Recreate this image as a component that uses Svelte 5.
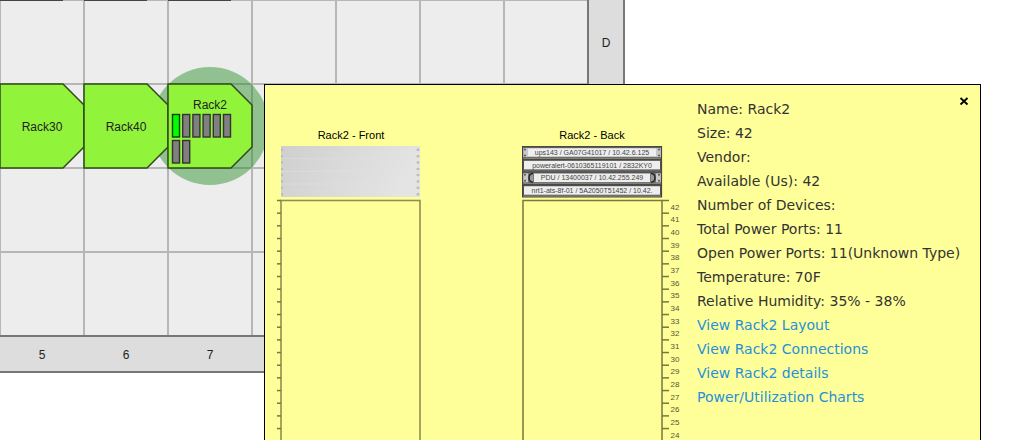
<script>
  const cell = 84;
  const columns = [1, 2, 3, 4, 5, 6];
  const rows = [1, 2, 3];
  const columnLabels = ['5', '6', '7'];
  const racks = [
    { name: 'Rack30', x: 0 },
    { name: 'Rack40', x: 84 },
    { name: 'Rack2', x: 168 }
  ];
  const ports = [0, 1, 2, 3, 4, 5, 6, 7];

  const unit = 12.67;
  const units = Array.from({ length: 19 }, (_, i) => 42 - i);
  const devices = [
    { label: 'ups143 / GA07G41017 / 10.42.6.125', x: 6, w: 128, ears: 'screw' },
    { label: 'poweralert-0610365119101 / 2832KY0', x: 2, w: 136, ears: '' },
    { label: 'PDU / 13400037 / 10.42.255.249', x: 12, w: 116, ears: 'handle' },
    { label: 'nrt1-ats-8f-01 / 5A2050T51452 / 10.42.', x: 2, w: 136, ears: '' }
  ];

  const facts = [
    ['Name', 'Rack2'],
    ['Size', '42'],
    ['Vendor', ''],
    ['Available (Us)', '42'],
    ['Number of Devices', ''],
    ['Total Power Ports', '11'],
    ['Open Power Ports', '11(Unknown Type)'],
    ['Temperature', '70F'],
    ['Relative Humidity', '35% - 38%']
  ];
  const links = ['View Rack2 Layout', 'View Rack2 Connections', 'View Rack2 details', 'Power/Utilization Charts'];

  let open = $state(true);
</script>

<main>
  <svg class="floor" width="625" height="373" viewBox="0 0 625 373" aria-label="Floor plan">
    <rect width="624" height="372" fill="#ddd" />
    <rect width="588" height="336" fill="#ededed" />
    <g stroke="#b6b6b6" stroke-width="2">
      <path d="M0 0V336M0 0H588" />
      {#each columns as c}<path d="M{c * cell} 0V336" />{/each}
      {#each rows as r}<path d="M0 {r * cell}H588" />{/each}
    </g>
    <path d="M0 336H588V0" fill="none" stroke="#777" stroke-width="2" />
    <path d="M0 372H624V0" fill="none" stroke="#777" stroke-width="2" />
    <path d="M0 0H63M84 0H147M168 0H231" stroke="#444" stroke-width="2" />
    <circle cx="210" cy="126" r="59" fill="#228b22" fill-opacity=".45" />
    {#each racks as rack}
      <path
        d="M{rack.x} 84h63l21 21v42l-21 21h-63z"
        fill="#92f33b"
        stroke="#2f4a18"
        stroke-width="1.5"
      />
      <text x={rack.x + 42} y={rack.name === 'Rack2' ? 109 : 131}>{rack.name}</text>
    {/each}
    {#each ports as p}
      <rect
        x={172.5 + (p % 6) * 10.2}
        y={p < 6 ? 114.5 : 140.5}
        width="7"
        height="22.5"
        fill={p === 0 ? '#0f0' : '#808080'}
        stroke={p === 0 ? '#064006' : '#333'}
        stroke-width="1.4"
      />
    {/each}
    {#each columnLabels as label, i}
      <text x={42 + i * cell} y="359">{label}</text>
    {/each}
    <text x="606" y="47">D</text>
  </svg>

  {#if open}
    <section class="popup" aria-label="Rack2">
      <figure class="front">
        <figcaption>Rack2 - Front</figcaption>
        <svg width="146" height="590" viewBox="-4 0 146 590">
          <defs>
            <linearGradient id="panel" x2="1" y2=".2">
              <stop offset="0" stop-color="#cfcfcf" />
              <stop offset=".5" stop-color="#dadada" />
              <stop offset="1" stop-color="#e4e4e4" />
            </linearGradient>
          </defs>
          <rect width="139" height="51" fill="url(#panel)" />
          {#each [0, 1, 2, 3] as i}
            {#if i > 0}<path d="M0 {i * unit}H139" stroke="#e2e2d6" stroke-width=".5" />{/if}
            {#each [3.5, 10] as dy}
              <rect x="0" y={i * unit + dy - 1} width="2" height="2.500" rx="1" fill="#b9b9b9" />
              <rect x="135.500" y={i * unit + dy - 1} width="3" height="2.500" rx="1" fill="#bdbdb9" />
            {/each}
          {/each}
          <rect x="0" y="54.500" width="139" height={42 * unit} fill="none" stroke="#8f8f55" stroke-width="1.600" />
          {#each units as u, i}
            <path d="M-4 {54.5 + i * unit}H0" stroke="#77773e" stroke-width="1.5" />
          {/each}
        </svg>
      </figure>

      <figure class="back">
        <figcaption>Rack2 - Back</figcaption>
        <svg width="162" height="590" viewBox="0 0 162 590">
          {#each devices as device, i}
            {@const y = i * unit}
            <rect x="0" {y} width="140" height="12.5" fill={device.ears ? '#777' : '#555'} />
            <path d="M0 {y + 0.7}H140" stroke="#484848" stroke-width="1.400" />
            <path d="M0 {y + 11.5}H140" stroke="#6e6e6e" stroke-width="1" />
            {#if device.ears}
              <rect x="1" y={y + 2} width="5" height="9" fill="#c8c8c8" />
              <rect x="134" y={y + 2} width="5" height="9" fill="#c8c8c8" />
              {#each [3, 137] as cx}
                <circle {cx} cy={y + 3.5} r="1" fill="#555" />
                <circle {cx} cy={y + 9.5} r="1" fill="#555" />
              {/each}
            {/if}
            {#if device.ears === 'handle'}
              <path d="M11 {y + 2}q-4 .5-4 4.500t4 4.500M129 {y + 2}q4 .5 4 4.500t-4 4.500" fill="#999" stroke="#222" stroke-width="1.400" />
            {/if}
            <rect x={device.x} y={y + 2.2} width={device.w} height="8.500" fill="#eee" />
            <text class="device" x="70" y={y + 9}>{device.label}</text>
          {/each}
          <path d="M.6 0V51H139.500V0" fill="none" stroke="#444" stroke-width="1.200" />
          <rect x="1" y="54.500" width="139" height={42 * unit} fill="none" stroke="#77773e" stroke-width="1.500" />
          {#each units as u, i}
            <path d="M140 {54.5 + i * unit}h7" stroke="#77773e" stroke-width="1.500" />
            <text class="unit" x="153" y={63.5 + i * unit}>{u}</text>
          {/each}
        </svg>
      </figure>

      <div class="info">
        <ul>
          {#each facts as [key, value]}<li>{key}: {value}</li>{/each}
          {#each links as link}<li><a href="#rack2">{link}</a></li>{/each}
        </ul>
      </div>
      <button type="button" aria-label="Close" onclick={() => (open = false)}>
        <svg width="10" height="10" viewBox="0 0 10 10">
          <path d="M1.500 2L8.500 8.500M8.500 2L1.500 8.500" stroke="#000" stroke-width="1.800" />
        </svg>
      </button>
    </section>
  {/if}
</main>

<style>
  :global(body) {
    margin: 0;
    background: #fff;
  }
  main {
    position: relative;
    height: 100vh;
    overflow: hidden;
    font-family: "Liberation Sans", Arial, sans-serif;
    color: #111;
  }
  svg {
    display: block;
  }
  text {
    font-size: 12px;
    text-anchor: middle;
    fill: #222;
  }
  .device {
    font-size: 7px;
    fill: #444;
  }
  .unit {
    font-size: 8px;
    fill: #555533;
  }
  .popup {
    position: absolute;
    top: 84px;
    left: 264px;
    right: 30px;
    box-sizing: border-box;
    display: flex;
    align-items: flex-start;
    padding: 12px;
    border: 1px solid #000;
    background: #ff9;
  }
  figure {
    flex: none;
    margin: 0;
    padding-top: 32px;
  }
  .front {
    margin-right: 99px;
  }
  figcaption {
    width: 140px;
    padding-bottom: 5px;
    font-size: 11px;
    line-height: 12px;
    text-align: center;
    color: #000;
  }
  .front figcaption {
    padding-left: 4px;
  }
  .info {
    flex: 1;
    padding-left: 13px;
    font: 14px/24px "DejaVu Sans", Verdana, sans-serif;
    white-space: nowrap;
    color: #333;
  }
  ul {
    margin: 0;
    padding: 0;
    list-style: none;
  }
  a {
    color: #2790da;
    text-decoration: none;
  }
  button {
    position: absolute;
    top: 11px;
    right: 11px;
    padding: 0;
    border: 0;
    background: none;
    cursor: pointer;
  }
</style>
